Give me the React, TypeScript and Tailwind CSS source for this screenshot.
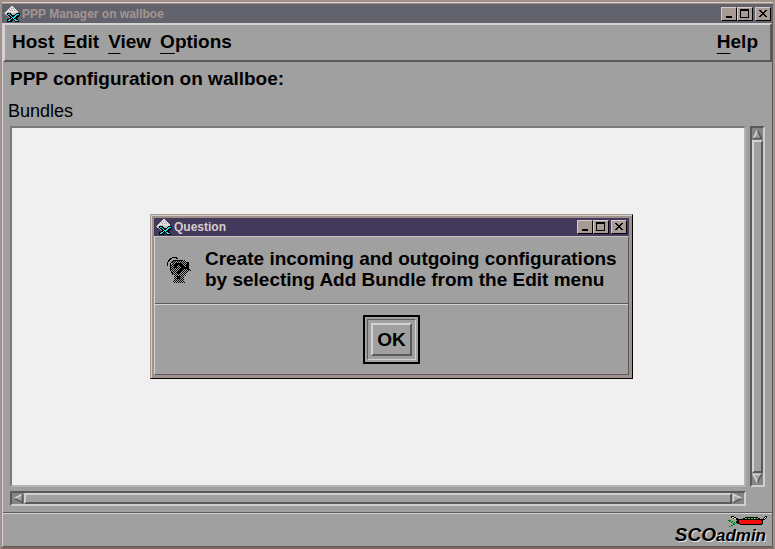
import type { ReactNode } from "react";

const menus = [
  { before: "Hos", key: "t", after: "" },
  { before: "", key: "E", after: "dit" },
  { before: "", key: "V", after: "iew" },
  { before: "", key: "O", after: "ptions" },
];

type MenuProps = { before: string; mnemonic: string; after: string };

function MenuButton({ before, mnemonic, after }: MenuProps) {
  return (
    <button type="button" className="text-[19px] leading-6 font-bold">
      {before}
      <span className="underline decoration-1 underline-offset-[5px] [text-decoration-skip-ink:none]">
        {mnemonic}
      </span>
      {after}
    </button>
  );
}

function WindowIcon() {
  return (
    <svg
      width="16"
      height="16"
      viewBox="0 0 16 16"
      shapeRendering="crispEdges"
      aria-hidden
      className="shrink-0"
    >
      <path d="M7 0h2v1h1v1h1v1h1v1h1v1h1v3H1V6h1V5h1V4h1V3h1V2h1V1h1z" fill="#dedede" />
      <path d="M0 7h14v1h-1v1h-1v1h-1v1h-1v1H5v-1H4v-1H3v-1H2V9H1V8H0z" fill="#b8b8b8" />
      <path
        d="M7 2h1v1H7zM9 2h1v1H9zM6 4h1v1H6zM8 4h1v1H8zM10 4h1v1h-1zM4 6h1v1H4zM6 6h1v1H6zM5 3h1v1H5zM3 7h1v1H3z"
        fill="#a2a2a2"
      />
      <path
        d="M3 7h4v1h1v1h3V8h1V7h4v3h-1v1h-1v1h-1v1h1v1h1v2h-4v-1h-1v-1H9v1H8v1H3v-3h2v-1h1v-1H5v-1H4V9H3z"
        fill="#000"
      />
      <path
        d="M4 8h2v1h1v1h1v1h2v-1h1V9h1V8h3v1h-2v1h-1v1h-1v1h-1v1h2v1h2v1h-3v-1h-1v-1H9v-1H8v1H7v1H6v1H4v-1h1v-1h2v-1h1v-1H7v-1H6v-1H5V9H4z"
        fill="#1fe5ee"
      />
    </svg>
  );
}

function FrameButton({ label, children }: { label: string; children: ReactNode }) {
  return (
    <button
      type="button"
      aria-label={label}
      className="h-[14px] w-4 border border-t-[#d9cbc8] border-r-black border-b-black border-l-[#d9cbc8] bg-[#a89a94]"
    >
      <svg
        width="14"
        height="12"
        viewBox="0 0 14 12"
        shapeRendering="crispEdges"
        aria-hidden
      >
        {children}
      </svg>
    </button>
  );
}

function TitleBar({ title, active }: { title: string; active?: boolean }) {
  return (
    <header
      className={
        active
          ? "flex h-[18px] items-center bg-[#43395c] px-[2px] text-[#d6cccb]"
          : "flex h-[19px] items-center bg-[#63636e] px-[2px] text-[#a39691]"
      }
    >
      <WindowIcon />
      <h1 className="ml-[2px] flex-1 text-[12px] leading-4 font-bold">{title}</h1>
      <FrameButton label="Minimize">
        <path d="M4 8h6v2H4z" />
      </FrameButton>
      <FrameButton label="Maximize">
        <path d="M2 1h9v9H2zM3 3v6h7V3z" fillRule="evenodd" />
      </FrameButton>
      <div className="ml-[2px] flex">
        <FrameButton label="Close">
          <path d="M3 2h2v1h1v1h2V3h1V2h2v1h-1v1H9v1H8v1h1v1h1v1h1v1H9V8H8V7H6v1H5v1H3V8h1V7h1V6h1V5H5V4H4V3H3z" />
        </FrameButton>
      </div>
    </header>
  );
}

function ArrowUp() {
  return (
    <svg width="11" height="12" viewBox="0 0 12 12" aria-hidden>
      <path d="M6 0L0 12h12z" fill="#a0a0a0" />
      <path d="M6 0L0 12h2L6 4z" fill="#d2d2d2" />
      <path d="M6 0l6 12H0l1-2h8L6 4z" fill="#5a5a5a" />
    </svg>
  );
}

function ArrowDown() {
  return (
    <svg width="11" height="12" viewBox="0 0 12 12" aria-hidden>
      <path d="M0 0h12L6 12z" fill="#a0a0a0" />
      <path d="M0 0h12l-1 2H3l3 6v4z" fill="#d2d2d2" />
      <path d="M12 0L6 12V8l4-8z" fill="#5a5a5a" />
    </svg>
  );
}

function ArrowLeft() {
  return (
    <svg width="12" height="11" viewBox="0 0 12 12" aria-hidden>
      <path d="M0 6L12 0v12z" fill="#a0a0a0" />
      <path d="M0 6L12 0v2L4 6z" fill="#d2d2d2" />
      <path d="M0 6l12 6V0l-2 1v8L4 6z" fill="#5a5a5a" />
    </svg>
  );
}

function ArrowRight() {
  return (
    <svg width="12" height="11" viewBox="0 0 12 12" aria-hidden>
      <path d="M0 0l12 6-12 6z" fill="#a0a0a0" />
      <path d="M0 12V0l12 6H8L2 3v8z" fill="#d2d2d2" />
      <path d="M12 6L0 12v-2l8-4z" fill="#5a5a5a" />
    </svg>
  );
}

function QuestionHead() {
  return (
    <svg
      width="25"
      height="26"
      viewBox="0 0 25 26"
      shapeRendering="crispEdges"
      aria-hidden
      className="shrink-0"
    >
      <defs>
        <pattern id="dither" width="2" height="2" patternUnits="userSpaceOnUse">
          <path d="M0 0h1v1H0zM1 1h1v1H1z" fill="#000" />
        </pattern>
      </defs>
      <path
        d="M5 4h3V3h10v1h2v2h2v5h1v1h1v1h1v1h-3v1h-2v2h-1v2h-2v5h1v2H6v-2h1v-6H6v-2H5v-2H4v-2H3V7h2z"
        fill="url(#dither)"
      />
      <path
        d="M0 9V5h1V3h1V2h1V1h2V0h5v1h1v1H9V1H5v1H4v1H3v1H2v1H1v4zM3 9V6h1V5h1V4h1V3h9v1H7v1H5v1H4v8h1v2h1v2H5v-2H4v-2H3z"
        fill="#000"
      />
      <path
        d="M7 8h1V7h1V6h6v1h1v1h1v4h-1v1h-1v1h-1v1h-1v2h-3v-3h1v-1h1v-1h1v-1h1V9h-1V8h-2v1h-1v2H7zM10 19h3v3h-3zM17 10h2V8h1V5h2v9h-1v-2h-4z"
        fill="#000"
      />
    </svg>
  );
}

function PocketKnife() {
  return (
    <svg
      width="40"
      height="13"
      viewBox="0 0 40 13"
      shapeRendering="crispEdges"
      aria-hidden
    >
      <path d="M9 3h25v1h1v4h-1v1H12V8h-2V7H8V5h1z" fill="#000" />
      <path d="M11 4h22v1h1v2h-1v1H12V7h-1z" fill="#f80d0d" />
      <path d="M17 1h13v1h2v2H15V2h2z" fill="#000" />
      <path d="M17 2h2v1h-2zM20 2h2v1h-2zM23 2h2v1h-2zM26 2h2v1h-2zM29 2h1v1h-1z" fill="#31e05a" />
      <path d="M3 0h3v1h2v1h2v2H8V3H5V2H3z" fill="#000" />
      <path d="M4 1h2v1h2v1H6V2H4z" fill="#f4ec9a" />
      <path d="M0 4h3v1h2v1h2v1h3v1H7v1H5v1H4v1H1v-1h2V9h2V7H3V6H1V5H0z" fill="#0a6d1c" />
      <path d="M2 5h2v1h2v1h3v1H6V7H4V6H2zM2 10h2v1H2z" fill="#2bc34b" />
      <path d="M33 3h2V2h1V1h1V0h2v2h-1v1h-1v1h-2v1h-1V4h-1z" fill="#000" />
      <path d="M36 2h1V1h1v1h-1v1h-1z" fill="#e8e8e8" />
    </svg>
  );
}

const trough =
  "flex border-2 border-t-[#5a5a5a] border-r-[#cfcfcf] border-b-[#cfcfcf] border-l-[#5a5a5a] bg-[#858585]";
const thumb =
  "flex-1 border-2 border-t-[#d2d2d2] border-r-[#5a5a5a] border-b-[#5a5a5a] border-l-[#d2d2d2] bg-[#a0a0a0]";

function QuestionDialog() {
  return (
    <section
      role="dialog"
      aria-label="Question"
      className="absolute top-[212px] left-[148px] w-[483px] border border-t-[#a19892] border-r-black border-b-black border-l-[#a19892] bg-[#a0918b]"
    >
      <div className="border-t border-l border-[#d9d0cc] pt-[2px] pr-[3px] pb-[3px] pl-[2px]">
        <TitleBar title="Question" active />
        <div className="border border-t-[#c9c2bf] border-r-[#5a5a5a] border-b-[#5a5a5a] border-l-[#d2d2d2] bg-[#a0a0a0]">
          <div className="flex gap-[13px] pt-[11px] pb-[13px] pl-3">
            <div className="pt-[9px]">
              <QuestionHead />
            </div>
            <p className="text-[19px] leading-[21px] font-bold whitespace-nowrap">
              Create incoming and outgoing configurations
              <br />
              by selecting Add Bundle from the Edit menu
            </p>
          </div>
          <div className="border-t border-[#5a5a5a]">
            <div className="flex justify-center border-t border-[#d2d2d2] py-[10px]">
              <div className="border-2 border-black p-[2px]">
                <div className="border border-t-[#5a5a5a] border-r-[#d2d2d2] border-b-[#d2d2d2] border-l-[#5a5a5a] p-[3px]">
                  <button
                    type="button"
                    className="block h-[33px] w-[41px] border-2 border-t-[#d2d2d2] border-r-[#5a5a5a] border-b-[#5a5a5a] border-l-[#d2d2d2] text-[19px] leading-6 font-bold"
                  >
                    OK
                  </button>
                </div>
              </div>
            </div>
          </div>
        </div>
      </div>
    </section>
  );
}

export default function App() {
  return (
    <div className="relative flex min-h-screen flex-col border-2 border-t-[#a0918b] border-r-[#a0918b] border-b-[#806a62] border-l-[#a0918b] bg-[#a0a0a0] font-['Liberation_Sans',Arial,sans-serif] text-black">
      <div className="border-t border-[#d9d0cc] bg-[#a0918b] pt-px">
        <TitleBar title="PPP Manager on wallboe" />
      </div>

      <main className="flex flex-1 flex-col border border-t-0 border-r-[#5a5a5a] border-b-[#5a5a5a] border-l-[#d2d2d2]">
        <nav className="flex h-[39px] items-start gap-[9px] border-2 border-t-[#d2d2d2] border-r-[#5a5a5a] border-b-[#5a5a5a] border-l-[#d2d2d2] pt-[5px] pr-3 pl-[7px]">
          {menus.map((menu) => (
            <MenuButton
              key={menu.key}
              before={menu.before}
              mnemonic={menu.key}
              after={menu.after}
            />
          ))}
          <div className="ml-auto">
            <MenuButton before="" mnemonic="H" after="elp" />
          </div>
        </nav>

        <h2 className="mt-[5px] pl-[7px] text-[19px] leading-6 font-bold">
          PPP configuration on wallboe:
        </h2>
        <p id="bundles" className="mt-2 pl-[5px] text-[18px] leading-6">
          Bundles
        </p>

        <div className="mt-[3px] flex flex-1 gap-1 pr-[7px] pl-[7px]">
          <div
            role="listbox"
            aria-labelledby="bundles"
            className="flex-1 border-2 border-t-[#7b7b7b] border-r-[#b4b4b4] border-b-[#b4b4b4] border-l-[#7b7b7b] bg-[#f0f0f0]"
          />
          <div className={`w-[15px] flex-col ${trough}`}>
            <button type="button" aria-label="Scroll up">
              <ArrowUp />
            </button>
            <div className={thumb} />
            <button type="button" aria-label="Scroll down">
              <ArrowDown />
            </button>
          </div>
        </div>

        <div className="mt-1 mb-[6px] flex pr-[26px] pl-[7px]">
          <div className={`h-[15px] flex-1 ${trough}`}>
            <button type="button" aria-label="Scroll left">
              <ArrowLeft />
            </button>
            <div className={thumb} />
            <button type="button" aria-label="Scroll right">
              <ArrowRight />
            </button>
          </div>
        </div>

        <footer className="border-t border-[#5a5a5a]">
          <div className="flex h-[33px] flex-col items-end border-t border-[#d2d2d2] pt-[2px] pr-1">
            <PocketKnife />
            <p className="-mt-1 pr-[2px] leading-5 font-bold italic [text-shadow:1px_1px_0_#e6e6e6]">
              <span className="text-[19px]">SCO</span>
              <span className="text-[17px]">admin</span>
            </p>
          </div>
        </footer>
      </main>

      <QuestionDialog />
    </div>
  );
}
